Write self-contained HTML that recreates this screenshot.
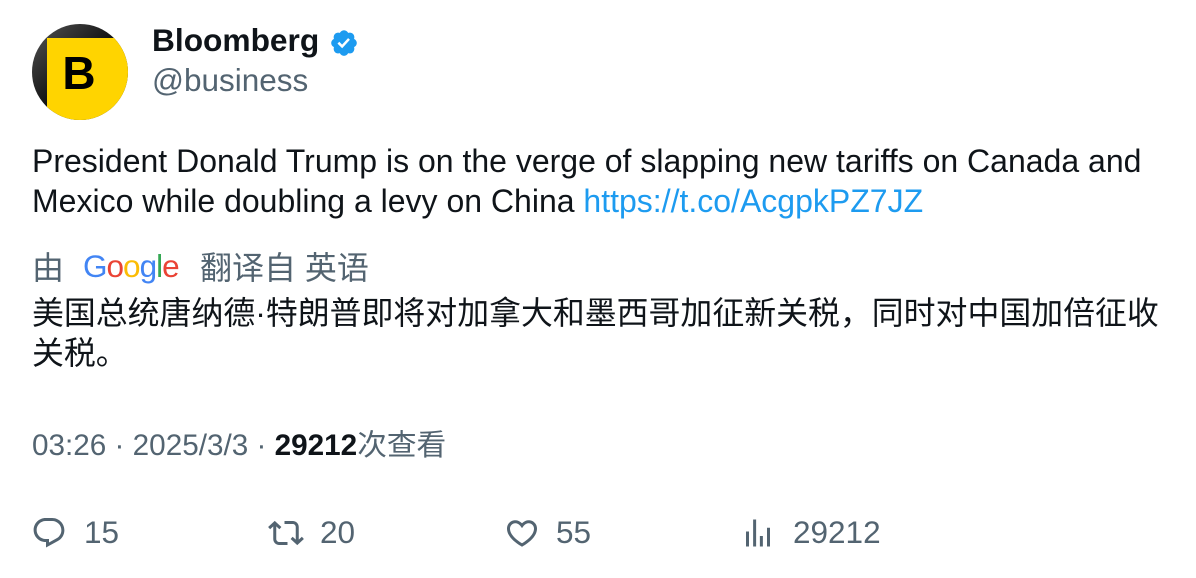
<!DOCTYPE html>
<html><head><meta charset="utf-8"><style>
*{margin:0;padding:0;box-sizing:border-box}
body{width:1196px;height:578px;background:#fff;font-family:"Liberation Sans","Noto Sans CJK SC",sans-serif;color:#0f1419;position:relative;overflow:hidden}
.a{position:absolute;white-space:nowrap}
.g{color:#536471}
</style></head><body>
<svg class="a" style="left:32px;top:24px" width="96" height="96" viewBox="0 0 96 96">
<defs><clipPath id="c"><circle cx="48" cy="48" r="48"/></clipPath>
<linearGradient id="lg" x1="0" y1="0" x2="1" y2="1"><stop offset="0" stop-color="#555"/><stop offset=".5" stop-color="#111"/></linearGradient></defs>
<g clip-path="url(#c)"><rect width="96" height="96" fill="url(#lg)"/><rect x="15" y="14" width="90" height="90" fill="#ffd400"/>
<text x="47" y="65" font-family="Liberation Sans" font-weight="bold" font-size="46" text-anchor="middle" fill="#000">B</text></g></svg>
<div class="a" style="left:152px;top:22px;font-size:31.7px;font-weight:bold">Bloomberg</div>
<svg class="a" style="left:329px;top:28px" width="30" height="30" viewBox="0 0 24 24"><path fill="#1d9bf0" d="M22.25 12c0-1.430-.88-2.67-2.19-3.340.46-1.390.2-2.9-.81-3.910s-2.52-1.270-3.910-.81c-.66-1.310-1.910-2.190-3.340-2.190s-2.670.88-3.330 2.190c-1.400-.46-2.910-.2-3.920.81s-1.260 2.520-.8 3.910c-1.310.67-2.200 1.910-2.200 3.340s.89 2.670 2.200 3.340c-.46 1.390-.21 2.900.8 3.910s2.520 1.260 3.910.81c.67 1.310 1.910 2.190 3.340 2.190s2.680-.88 3.340-2.190c1.390.45 2.900.2 3.910-.81s1.270-2.520.81-3.910c1.310-.67 2.190-1.910 2.190-3.340zm-11.710 4.200L6.8 12.460l1.410-1.420 2.260 2.260 4.800-5.230 1.470 1.360-6.200 6.770z"/></svg>
<div class="a g" style="left:152px;top:62px;font-size:31.5px">@business</div>
<div class="a" style="left:32px;top:141px;font-size:32px;line-height:40px">President Donald Trump is on the verge of slapping new tariffs on Canada and<br>Mexico while doubling a levy on China <span style="color:#1d9bf0">https://t.co/AcgpkPZ7JZ</span></div>
<div class="a g" style="left:32px;top:243px;font-size:32px">由</div>
<div class="a" style="left:83px;top:248px;font-size:31.5px;letter-spacing:-1px"><span style="color:#4285f4">G</span><span style="color:#ea4335">o</span><span style="color:#fbbc05">o</span><span style="color:#4285f4">g</span><span style="color:#34a853">l</span><span style="color:#ea4335">e</span></div>
<div class="a g" style="left:200px;top:243px;font-size:32px">翻译自 英语</div>
<div class="a" style="left:32px;top:293px;font-size:31.9px;line-height:40px">美国总统唐纳德·特朗普即将对加拿大和墨西哥加征新关税，同时对中国加倍征收<br>关税。</div>
<div class="a g" style="left:32px;top:421px;font-size:29.7px">03:26 · 2025/3/3 · <b style="color:#0f1419">29212</b>次查看</div>
<svg class="a" style="left:31px;top:515px" width="36" height="36" viewBox="0 0 24 24" fill="#536471"><path d="M1.751 10c0-4.42 3.584-8 8.005-8h4.366c4.49 0 8.129 3.64 8.129 8.13 0 2.96-1.607 5.68-4.196 7.11l-8.054 4.46v-3.690h-.067c-4.49.1-8.183-3.51-8.183-8.01zm8.005-6c-3.317 0-6.005 2.69-6.005 6 0 3.37 2.77 6.080 6.138 6.010l.351-.01h1.761v2.3l5.087-2.81c1.951-1.080 3.163-3.130 3.163-5.360 0-3.390-2.744-6.130-6.129-6.130H9.756z"/></svg>
<div class="a g" style="left:84px;top:514px;font-size:31.5px">15</div>
<svg class="a" style="left:268px;top:515px" width="36" height="36" viewBox="0 0 24 24" fill="#536471"><path d="M4.5 3.88l4.432 4.14-1.364 1.46L5.5 7.55V16c0 1.1.896 2 2 2H13v2H7.5c-2.209 0-4-1.79-4-4V7.55L1.432 9.48.068 8.02 4.5 3.88zM16.5 6H11V4h5.5c2.209 0 4 1.79 4 4v8.45l2.068-1.930 1.364 1.460-4.432 4.140-4.432-4.140 1.364-1.460 2.068 1.930V8c0-1.1-.896-2-2-2z"/></svg>
<div class="a g" style="left:320px;top:514px;font-size:31.5px">20</div>
<svg class="a" style="left:504px;top:515px" width="36" height="36" viewBox="0 0 24 24" fill="#536471"><path d="M16.697 5.5c-1.222-.06-2.679.51-3.89 2.16l-.805 1.09-.806-1.09C9.984 6.01 8.526 5.44 7.304 5.5c-1.243.07-2.349.78-2.91 1.91-.552 1.12-.633 2.78.479 4.82 1.074 1.97 3.257 4.27 7.129 6.61 3.870-2.340 6.052-4.640 7.126-6.610 1.111-2.040 1.030-3.700.477-4.820-.561-1.130-1.666-1.840-2.908-1.910zm4.187 7.690c-1.351 2.480-4.001 5.120-8.379 7.670l-.503.3-.504-.3c-4.379-2.550-7.029-5.190-8.382-7.670-1.360-2.500-1.410-4.860-.514-6.670.887-1.790 2.647-2.910 4.601-3.010 1.651-.09 3.368.56 4.798 2.010 1.429-1.450 3.146-2.100 4.796-2.010 1.954.1 3.714 1.220 4.601 3.010.896 1.810.846 4.170-.514 6.670z"/></svg>
<div class="a g" style="left:556px;top:514px;font-size:31.5px">55</div>
<svg class="a" style="left:740px;top:515px" width="36" height="36" viewBox="0 0 24 24" fill="#536471"><path d="M8.75 21V3h2v18h-2zM18 21V8.5h2V21h-2zM4 21l.004-10h2L6 21H4zm9.248 0v-7h2v7h-2z"/></svg>
<div class="a g" style="left:793px;top:514px;font-size:31.5px">29212</div>
</body></html>
